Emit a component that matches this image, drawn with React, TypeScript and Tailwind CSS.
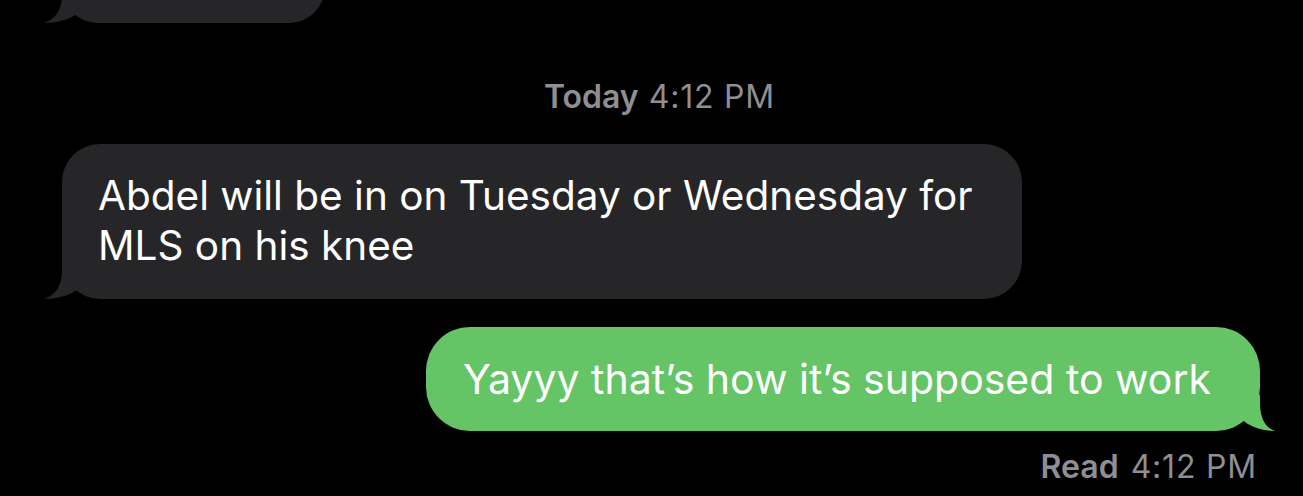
import React from "react";

const GRAY = "#262628";
const GREEN = "#65c466";

function LeftTail({ color }: { color: string }) {
  return (
    <svg
      className="absolute bottom-0 left-[-18px]"
      width="40"
      height="36"
      viewBox="0 0 40 36"
    >
      <path
        d="M18 0 L18 8 C18 24 10 33 0 36 C12 36 24 33 33 27 L40 20 L40 0 Z"
        fill={color}
      />
    </svg>
  );
}

function RightTail({ color }: { color: string }) {
  return (
    <svg
      className="absolute bottom-0 right-[-15px]"
      width="37"
      height="36"
      viewBox="0 0 37 36"
    >
      <path
        d="M22 0 L22 8 C22 24 28 33 37 36 C26 36 15 33 7 27 L0 20 L0 0 Z"
        fill={color}
      />
    </svg>
  );
}

export default function App() {
  return (
    <div
      className="w-[1303px] h-[496px] overflow-hidden bg-black text-white flex flex-col"
      style={{ fontFamily: "Inter, 'Noto Sans', sans-serif" }}
    >
      {/* partially visible previous bubble */}
      <div className="pl-[62px]">
        <div className="relative mt-[-77px] h-[100px] w-[263px] rounded-[36px] bg-[#262628]">
          <LeftTail color={GRAY} />
        </div>
      </div>

      {/* timestamp */}
      <div className="mt-[59px] h-[30px] pl-[16px] flex items-center justify-center text-[32px] leading-none text-[#8e8e93]">
        <span className="font-semibold">Today</span>
        <span className="ml-[10px] tracking-[0.8px]">4:12 PM</span>
      </div>

      {/* incoming message */}
      <div className="mt-[32px] pl-[62px]">
        <div className="relative w-[960px] h-[155px] rounded-[38px] bg-[#262628] px-[36px] py-[27px] text-[40.5px] leading-[50px]">
          <LeftTail color={GRAY} />
          <p className="relative whitespace-nowrap">
            Abdel will be in on Tuesday or Wednesday for
            <br />
            MLS on his knee
          </p>
        </div>
      </div>

      {/* outgoing message */}
      <div className="mt-[28px] flex justify-end pr-[43px]">
        <div className="relative h-[104px] w-[834px] rounded-[44px] bg-[#65c466] pl-[37px] flex items-center text-[41px] leading-[50px]">
          <RightTail color={GREEN} />
          <p className="relative whitespace-nowrap">Yayyy that’s how it’s supposed to work</p>
        </div>
      </div>

      {/* read receipt */}
      <div className="mt-[20px] flex justify-end pr-[46px] text-[32px] leading-none text-[#8e8e93]">
        <span className="font-semibold">Read</span>
        <span className="ml-[12px] tracking-[0.8px]">4:12 PM</span>
      </div>
    </div>
  );
}
